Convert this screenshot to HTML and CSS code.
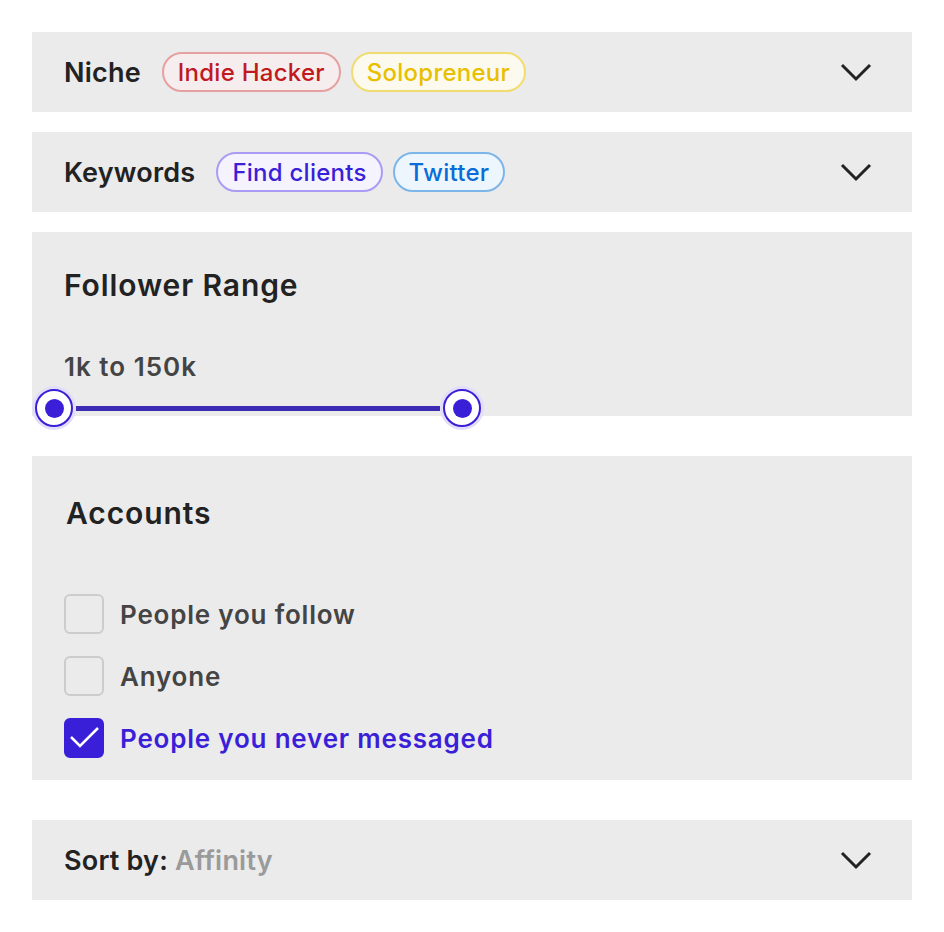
FILE: index.html
```html
<!DOCTYPE html>
<html lang="en">
<head>
  <meta charset="UTF-8" />
  <title>Filters</title>
  <link rel="stylesheet" href="styles.css">
</head>
<body>
  <div class="filters">
    <div class="panel row">
      <div class="row-left">
        <span class="label">Niche</span>
        <span class="tag tag-red">Indie Hacker</span>
        <span class="tag tag-yellow">Solopreneur</span>
      </div>
      <svg class="chevron" viewBox="0 0 32 32" width="32" height="32"><path d="M2 9 L16 23 L30 9" /></svg>
    </div>

    <div class="panel row">
      <div class="row-left">
        <span class="label">Keywords</span>
        <span class="tag tag-purple">Find clients</span>
        <span class="tag tag-blue">Twitter</span>
      </div>
      <svg class="chevron" viewBox="0 0 32 32" width="32" height="32"><path d="M2 9 L16 23 L30 9" /></svg>
    </div>

    <div class="panel range">
      <h2 class="title">Follower Range</h2>
      <div class="range-value">1k to 150k</div>
      <div class="slider">
        <span class="handle"></span>
        <span class="track"></span>
        <span class="handle"></span>
      </div>
    </div>

    <div class="panel accounts">
      <h2 class="title">Accounts</h2>
      <ul class="options">
        <li class="option"><span class="box"></span>People you follow</li>
        <li class="option"><span class="box"></span>Anyone</li>
        <li class="option checked">
          <span class="box"><svg viewBox="0 0 40 40" width="40" height="40"><path d="M7 19 L16 28 L34 10" /></svg></span>
          People you never messaged
        </li>
      </ul>
    </div>

    <div class="panel row">
      <div class="row-left">
        <span class="label">Sort by: <span class="muted">Affinity</span></span>
      </div>
      <svg class="chevron" viewBox="0 0 32 32" width="32" height="32"><path d="M2 9 L16 23 L30 9" /></svg>
    </div>
  </div>
</body>
</html>
```

FILE: styles.css
```css
body {
  margin: 0;
  background: #fff;
  font-family: Inter, "Noto Sans", sans-serif;
  color: #222;
}

.filters {
  padding: 32px;
  display: flex;
  flex-direction: column;
}

.panel {
  background: #ebebeb;
  padding: 0 32px;
}

.row {
  height: 80px;
  display: flex;
  align-items: center;
  justify-content: space-between;
  padding-right: 40px;
  margin-bottom: 20px;
}

.row:last-child {
  margin-bottom: 0;
}

.row-left {
  display: flex;
  align-items: center;
}

.label {
  font-size: 27px;
  font-weight: 600;
  letter-spacing: 0.2px;
  color: #222;
  margin-right: 21px;
}

.muted {
  color: #9a9a9a;
}

.tag {
  height: 40px;
  box-sizing: border-box;
  display: inline-flex;
  align-items: center;
  padding: 0 14px;
  border: 2px solid;
  border-radius: 20px;
  font-size: 24px;
  font-weight: 500;
  letter-spacing: 0.25px;
  margin-right: 10px;
}

.tag-red {
  color: #c01a1e;
  background: #f6eeee;
  border-color: #e6a0a0;
}

.tag-yellow {
  color: #e8c000;
  background: #fcf9ee;
  border-color: #f2dc70;
}

.tag-purple {
  color: #3a1fd8;
  background: #f5f3fd;
  border-color: #a99cf4;
}

.tag-blue {
  color: #0a6cd6;
  background: #eef6fd;
  border-color: #7cb6e8;
}

.chevron {
  fill: none;
  stroke: #222;
  stroke-width: 3;
}

.title {
  margin: 0;
  font-size: 30px;
  line-height: 34px;
  font-weight: 600;
  letter-spacing: 0.9px;
  color: #222;
}

.range {
  height: 184px;
  box-sizing: border-box;
  padding-top: 36px;
  margin-bottom: 40px;
}

.range-value {
  margin-top: 50px;
  font-size: 26px;
  line-height: 30px;
  font-weight: 600;
  letter-spacing: 1px;
  color: #444;
}

.slider {
  margin: 4px 0 0 -32px;
  width: 452px;
  height: 44px;
  display: flex;
  align-items: center;
}

.track {
  flex: 1;
  height: 5px;
  background: #3b2bb5;
}

.handle {
  width: 44px;
  height: 44px;
  box-sizing: border-box;
  border-radius: 50%;
  background: #e2ddfb;
  display: flex;
  align-items: center;
  justify-content: center;
  position: relative;
}

.handle::before {
  content: "";
  width: 38px;
  height: 38px;
  box-sizing: border-box;
  border-radius: 50%;
  border: 2px solid #3a1fd8;
  background: #fff;
  position: absolute;
  left: 3px;
  top: 3px;
}

.handle::after {
  content: "";
  width: 19px;
  height: 19px;
  border-radius: 50%;
  background: #3a1fd8;
  position: relative;
}

.accounts {
  padding-top: 40px;
  padding-bottom: 22px;
  margin-bottom: 40px;
}

.accounts .title {
  padding-left: 2px;
}

.options {
  list-style: none;
  margin: 64px 0 0;
  padding: 0;
  display: flex;
  flex-direction: column;
  gap: 22px;
}

.option {
  display: flex;
  align-items: center;
  font-size: 26px;
  font-weight: 600;
  letter-spacing: 0.8px;
  color: #444;
}

.box {
  width: 40px;
  height: 40px;
  box-sizing: border-box;
  border: 2px solid #cccccc;
  border-radius: 6px;
  margin-right: 16px;
  display: flex;
}

.checked {
  color: #3a1fd8;
}

.checked .box {
  background: #3a1fd8;
  border-color: #3a1fd8;
}

.checked .box svg {
  margin: -2px;
  fill: none;
  stroke: #fff;
  stroke-width: 2.5;
}
```
